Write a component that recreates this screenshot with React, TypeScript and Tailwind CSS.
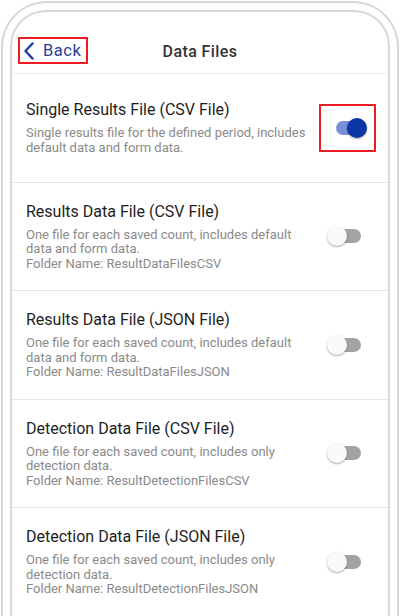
import React from "react"

const files = [
  {
    title: "Single Results File (CSV File)",
    desc: "Single results file for the defined period, includes default data and form data.",
    folder: "",
    on: true,
  },
  {
    title: "Results Data File (CSV File)",
    desc: "One file for each saved count, includes default data and form data.",
    folder: "ResultDataFilesCSV",
    on: false,
  },
  {
    title: "Results Data File (JSON File)",
    desc: "One file for each saved count, includes default data and form data.",
    folder: "ResultDataFilesJSON",
    on: false,
  },
  {
    title: "Detection Data File (CSV File)",
    desc: "One file for each saved count, includes only detection data.",
    folder: "ResultDetectionFilesCSV",
    on: false,
  },
  {
    title: "Detection Data File (JSON File)",
    desc: "One file for each saved count, includes only detection data.",
    folder: "ResultDetectionFilesJSON",
    on: false,
  },
]

function Toggle({ on }: { on: boolean }) {
  return (
    <div className="relative w-[40px] h-[20px]">
      <div
        className={
          on
            ? "absolute left-[9px] top-[3px] w-[25px] h-[14px] rounded-full bg-[#7b8fd6]"
            : "absolute left-[9px] top-[3px] w-[25px] h-[14px] rounded-full bg-[#a3a3a3]"
        }
      />
      <div
        className={
          on
            ? "absolute left-[20px] top-0 w-[20px] h-[20px] rounded-full bg-[#0b37a6] shadow-[0_1px_2px_rgba(0,0,0,0.35)]"
            : "absolute left-0 top-0 w-[20px] h-[20px] rounded-full bg-[#fafafa] shadow-[0_1px_2px_rgba(0,0,0,0.35)]"
        }
      />
    </div>
  )
}

export default function App() {
  return (
    <div className="w-[400px] h-[616px] overflow-hidden bg-white pt-[1px] px-[1px] font-['Roboto',sans-serif]">
      {/* device frame */}
      <div className="h-[700px] rounded-t-[46px] border-2 border-b-0 border-[#d5d9d9] px-[7px] pt-[7px]">
        <div className="h-full rounded-t-[36px] border-2 border-b-0 border-[#d5d9d9] bg-white">
          {/* header */}
          <div className="h-[62px] pt-[19px] grid grid-cols-[1fr_auto_1fr] items-center border-b border-[#ececec]">
            <div className="pl-[6px]">
              <div className="inline-flex items-center h-[27px] w-[70px] border-2 border-[#ee1c25] pl-[3px] gap-[8px] text-[#2a3c9c]">
                <svg width="12" height="18" viewBox="0 0 12 18" fill="none">
                  <path d="M9.5 1.5L2.5 9L9.5 16.5" stroke="#1f3aa0" strokeWidth="2.4" strokeLinecap="round" strokeLinejoin="round" />
                </svg>
                <span className="text-[16.5px] tracking-[0.5px] leading-none">Back</span>
              </div>
            </div>
            <div className="text-[16px] font-medium text-[#333] tracking-[0.4px]">Data Files</div>
            <div />
          </div>

          {files.map((f, i) => (
            <div
              key={i}
              className="h-[108.5px] flex items-center justify-between pl-[14px] pr-[21px] border-b border-[#e6e6e6]"
            >
              <div className="w-[283px]">
                <div className="text-[16px] leading-[19px] text-[#1e1e1e]">{f.title}</div>
                <div className="mt-[7px] text-[13px] leading-[14.5px] text-[#8a8a8a]">
                  {f.desc}
                  {f.folder && (
                    <>
                      <br />
                      Folder Name: {f.folder}
                    </>
                  )}
                </div>
              </div>
              <div className="relative">
                <Toggle on={f.on} />
                {f.on && (
                  <span className="absolute -left-[8px] -right-[9px] -top-[14px] -bottom-[14px] border-2 border-[#ee1c25]" />
                )}
              </div>
            </div>
          ))}
        </div>
      </div>
    </div>
  )
}
